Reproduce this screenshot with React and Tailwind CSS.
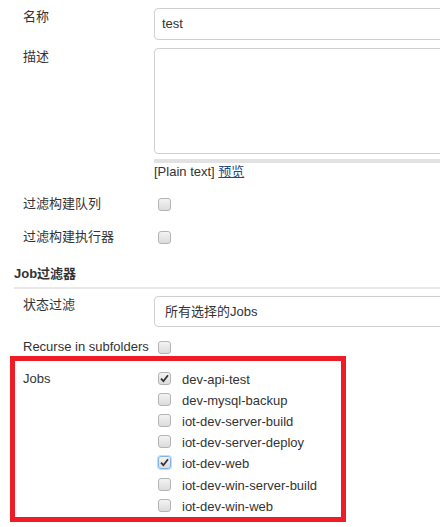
import React from 'react';

const jobs = [
  { name: 'dev-api-test', checked: true },
  { name: 'dev-mysql-backup' },
  { name: 'iot-dev-server-build' },
  { name: 'iot-dev-server-deploy' },
  { name: 'iot-dev-web', checked: true, focus: true },
  { name: 'iot-dev-win-server-build' },
  { name: 'iot-dev-win-web' },
];

// Old-style grey checkbox
const Box = ({ checked, focus }) => (
  <span
    className={`ml-[4px] flex h-[13px] w-[13px] shrink-0 items-center justify-center rounded-[3px] border bg-gradient-to-b from-[#f3f3f3] to-[#dcdcdc] ${
      focus ? 'border-[#7eb4ea] shadow-[0_0_0_1px_#c5dcf5]' : 'border-[#b4b4b4]'
    }`}
  >
    {checked && (
      <svg width="9" height="9" viewBox="0 0 9 9">
        <path d="M1 4.6 L3.4 7.2 L8 1.2" fill="none" stroke="#333" strokeWidth="1.8" />
      </svg>
    )}
  </span>
);

export default function App() {
  return (
    <div className="h-[527px] w-[440px] overflow-hidden bg-white pt-[8px] font-['Liberation_Sans','Noto_Sans_CJK_SC',sans-serif] text-[13px] leading-[18px] text-[#333]">
      {/* 名称 */}
      <div className="flex pl-[23px]">
        <div className="w-[131px] shrink-0">名称</div>
        <div className="flex h-[32px] w-[320px] shrink-0 items-center rounded-[4px] border border-[#cfcfcf] pl-[7px]">
          test
        </div>
      </div>

      {/* 描述 */}
      <div className="mt-[8px] flex pl-[23px]">
        <div className="w-[131px] shrink-0">描述</div>
        <div className="w-[320px] shrink-0">
          <div className="h-[106px] rounded-[4px] border border-[#cfcfcf]" />
          <div className="mt-[5px] h-[4px] bg-[#e2e2e2]" />
          <div className="whitespace-nowrap">
            [Plain text] <span className="text-[#204a87] underline">预览</span>
          </div>
        </div>
      </div>

      {/* checkbox rows */}
      <div className="mt-[14px] flex h-[18px] items-center pl-[23px]">
        <div className="w-[131px] shrink-0">过滤构建队列</div>
        <Box />
      </div>
      <div className="mt-[15px] flex h-[18px] items-center pl-[23px]">
        <div className="w-[131px] shrink-0">过滤构建执行器</div>
        <Box />
      </div>

      {/* Job过滤器 */}
      <div className="mt-[19px] pl-[14px] font-bold">Job过滤器</div>
      <div className="ml-[14px] mt-[4px] h-[2px] bg-[#e8e8e8]" />

      <div className="mt-[7px] flex pl-[23px]">
        <div className="w-[131px] shrink-0">状态过滤</div>
        <div className="flex h-[31px] w-[320px] shrink-0 items-center rounded-[4px] border border-[#cfcfcf] pl-[10px]">
          所有选择的Jobs
        </div>
      </div>

      <div className="mt-[11px] flex h-[18px] items-center pl-[23px]">
        <div className="w-[131px] shrink-0 whitespace-nowrap">Recurse in subfolders</div>
        <Box />
      </div>

      {/* Jobs list, highlighted */}
      <div className="ml-[10px] h-[166px] w-[336px] border-[5px] border-[#ee1c25] pl-[8px] pt-[8px]">
        <div className="flex">
          <div className="w-[131px] shrink-0 pt-[1px]">Jobs</div>
          <div>
            {jobs.map((j) => (
              <div key={j.name} className="flex h-[21.2px] items-center whitespace-nowrap">
                <span className="mb-[3px] flex">
                  <Box checked={j.checked} focus={j.focus} />
                </span>
                <span className="ml-[11px]">{j.name}</span>
              </div>
            ))}
          </div>
        </div>
      </div>
    </div>
  );
}
